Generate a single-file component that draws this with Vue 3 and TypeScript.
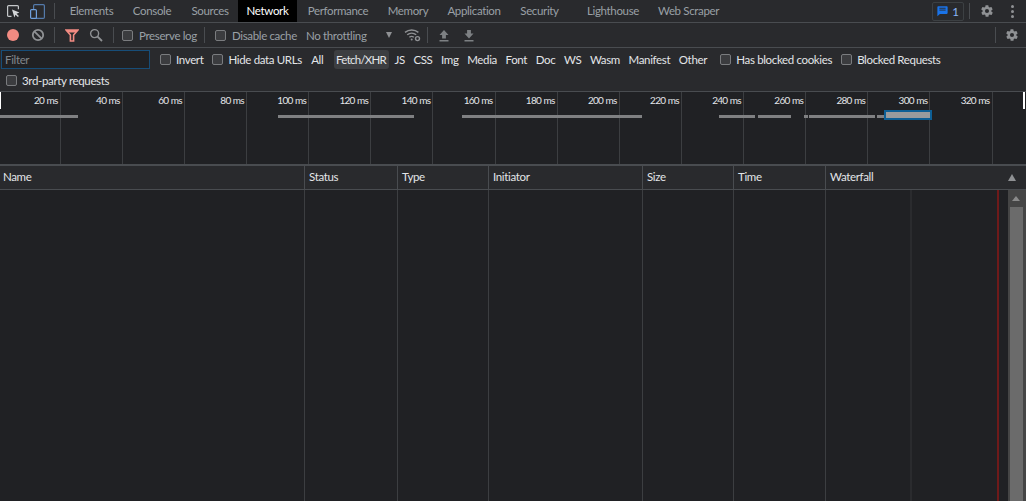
<script setup lang="ts">
const tabs = [
  { label: 'Elements', width: 61 },
  { label: 'Console', width: 60 },
  { label: 'Sources', width: 56 },
  { label: 'Network', width: 59, active: true },
  { label: 'Performance', width: 82 },
  { label: 'Memory', width: 58 },
  { label: 'Application', width: 74 },
  { label: 'Security', width: 57 },
  { label: 'Lighthouse', width: 90 },
  { label: 'Web Scraper', width: 61 },
]

const types = ['All', 'Fetch/XHR', 'JS', 'CSS', 'Img', 'Media', 'Font', 'Doc', 'WS', 'Wasm', 'Manifest', 'Other']

const ticks = Array.from({ length: 16 }, (_, i) => `${(i + 1) * 20} ms`)

const bars = [
  { left: -2, width: 80 },
  { left: 278, width: 136 },
  { left: 462, width: 180 },
  { left: 719, width: 36 },
  { left: 758, width: 33 },
  { left: 804, width: 4 },
  { left: 809, width: 66 },
  { left: 877, width: 7 },
]

const columns = [
  { label: 'Name', width: 305 },
  { label: 'Status', width: 93 },
  { label: 'Type', width: 91 },
  { label: 'Initiator', width: 154 },
  { label: 'Size', width: 91 },
  { label: 'Time', width: 92 },
]

const colWidths = columns.map((c) => c.width)
</script>

<template>
  <div class="devtools">
    <header class="tabbar">
      <div class="tool-icons">
        <svg width="13" height="13" viewBox="0 0 13 13" class="ic-inspect">
          <path d="M4.5 11.4H1.6a1 1 0 0 1-1-1V1.6a1 1 0 0 1 1-1h8.8a1 1 0 0 1 1 1v2.6" fill="none" stroke="#c4c7c9" stroke-width="1.2" />
          <path d="M5 4.6l7.4 3-2.9 1.1 2.4 2.4-1 1-2.4-2.4-1.1 2.9z" fill="#d5d7d9" />
        </svg>
        <svg width="15" height="15" viewBox="0 0 15 15" class="ic-device">
          <rect x="3.6" y="0.6" width="10.8" height="13.8" rx="1.2" fill="none" stroke="#5f8fc9" stroke-opacity=".8" stroke-width="1.2" />
          <rect x="0.6" y="5.6" width="5.8" height="8.8" rx="1" fill="#292a2d" stroke="#6f9fdc" stroke-width="1.2" />
        </svg>
      </div>
      <i class="sep sep-tabs"></i>
      <nav class="tabs">
        <span
          v-for="tab in tabs"
          :key="tab.label"
          class="tab"
          :class="{ active: tab.active }"
          :style="{ width: tab.width + 'px' }"
        >{{ tab.label }}</span>
      </nav>
      <div class="tab-end">
        <div class="issues">
          <svg width="11" height="12" viewBox="0 0 12 12">
            <path d="M1.3 0.8h9.4a.9.9 0 0 1 .9.9v6.6a.9.9 0 0 1-.9.9H3.2L.4 11.6V1.7a.9.9 0 0 1 .9-.9z" fill="#1a73e8" />
            <path d="M2.6 3h6.8M2.6 5h6.8" stroke="#292a2d" stroke-width="1" />
          </svg>
          <span>1</span>
        </div>
        <i class="sep"></i>
        <svg class="gear" width="14" height="14" viewBox="0 0 24 24">
          <path d="M19.4 13a7.8 7.8 0 0 0 0-2l2.1-1.6a.5.5 0 0 0 .1-.6l-2-3.5a.5.5 0 0 0-.6-.2l-2.5 1a7.5 7.5 0 0 0-1.7-1l-.4-2.7a.5.5 0 0 0-.5-.4h-4a.5.5 0 0 0-.5.4l-.4 2.7a7.5 7.5 0 0 0-1.7 1l-2.5-1a.5.5 0 0 0-.6.2l-2 3.5a.5.5 0 0 0 .1.6L4.6 11a7.8 7.8 0 0 0 0 2l-2.1 1.6a.5.5 0 0 0-.1.6l2 3.5c.1.2.4.3.6.2l2.5-1c.5.4 1.1.7 1.7 1l.4 2.7c0 .2.2.4.5.4h4c.3 0 .5-.2.5-.4l.4-2.7c.6-.3 1.2-.6 1.7-1l2.5 1c.2.1.5 0 .6-.2l2-3.5a.5.5 0 0 0-.1-.6zM12 15.5a3.5 3.5 0 1 1 0-7 3.5 3.5 0 0 1 0 7z" fill="#8f9194" />
        </svg>
        <div class="dots"><b></b><b></b><b></b></div>
      </div>
    </header>

    <div class="toolbar">
      <span class="record"></span>
      <svg class="ic-clear" width="14" height="14" viewBox="0 0 14 14">
        <circle cx="7" cy="7" r="5.2" fill="none" stroke="#8f9194" stroke-width="1.8" />
        <path d="M3.3 3.3l7.4 7.4" stroke="#8f9194" stroke-width="1.8" />
      </svg>
      <i class="sep sep-a"></i>
      <svg class="ic-filter" width="14" height="13" viewBox="0 0 14 13">
        <path d="M1 1h12L8.6 6v6H5.4V6z" fill="none" stroke="#f28b82" stroke-width="1.6" />
        <path d="M1 1h12L10.5 3.6h-7z" fill="#f28b82" />
      </svg>
      <svg class="ic-search" width="14" height="14" viewBox="0 0 14 14">
        <circle cx="5.6" cy="5.6" r="4" fill="none" stroke="#8f9194" stroke-width="1.4" />
        <path d="M8.6 8.6l4.4 4.4" stroke="#8f9194" stroke-width="1.8" />
      </svg>
      <i class="sep sep-b"></i>
      <label class="check dim preserve"><i class="box"></i>Preserve log</label>
      <i class="sep"></i>
      <label class="check dim disable"><i class="box"></i>Disable cache</label>
      <span class="throttle">No throttling</span>
      <i class="caret"></i>
      <svg class="ic-wifi" width="17" height="14" viewBox="0 0 17 14">
        <path d="M1 4.4a10.4 10.4 0 0 1 13.4 0M3.2 6.8a7 7 0 0 1 9 0M5.4 9.2a3.6 3.6 0 0 1 4.4 0" fill="none" stroke="#8f9194" stroke-width="1.4" />
        <circle cx="7.7" cy="11.4" r="1" fill="#8f9194" />
        <circle cx="13.5" cy="10.6" r="2" fill="#292a2d" stroke="#8f9194" stroke-width="1.4" />
      </svg>
      <i class="sep sep-c"></i>
      <svg class="ic-up" width="12" height="13" viewBox="0 0 12 13">
        <path d="M6 1L1.5 6h2.6v3.6h3.8V6h2.6zM1.5 11h9v1.6h-9z" fill="#7d8083" />
      </svg>
      <svg class="ic-down" width="12" height="13" viewBox="0 0 12 13">
        <path d="M4.1 1h3.8v3.6h2.6L6 9.6 1.5 4.6h2.6zM1.5 11h9v1.6h-9z" fill="#7d8083" />
      </svg>
      <div class="toolbar-end">
        <i class="sep"></i>
        <svg class="gear" width="14" height="14" viewBox="0 0 24 24">
          <path d="M19.4 13a7.8 7.8 0 0 0 0-2l2.1-1.6a.5.5 0 0 0 .1-.6l-2-3.5a.5.5 0 0 0-.6-.2l-2.5 1a7.5 7.5 0 0 0-1.7-1l-.4-2.7a.5.5 0 0 0-.5-.4h-4a.5.5 0 0 0-.5.4l-.4 2.7a7.5 7.5 0 0 0-1.7 1l-2.5-1a.5.5 0 0 0-.6.2l-2 3.5a.5.5 0 0 0 .1.6L4.6 11a7.8 7.8 0 0 0 0 2l-2.1 1.6a.5.5 0 0 0-.1.6l2 3.5c.1.2.4.3.6.2l2.5-1c.5.4 1.1.7 1.7 1l.4 2.7c0 .2.2.4.5.4h4c.3 0 .5-.2.5-.4l.4-2.7c.6-.3 1.2-.6 1.7-1l2.5 1c.2.1.5 0 .6-.2l2-3.5a.5.5 0 0 0-.1-.6zM12 15.5a3.5 3.5 0 1 1 0-7 3.5 3.5 0 0 1 0 7z" fill="#8f9194" />
        </svg>
      </div>
    </div>

    <div class="filters">
      <div class="filter-row">
        <div class="filter-input">Filter</div>
        <label class="check invert"><i class="box"></i>Invert</label>
        <label class="check hide-urls"><i class="box"></i>Hide data URLs</label>
        <div class="types">
          <span v-for="t in types" :key="t" class="type" :class="{ on: t === 'Fetch/XHR', all: t === 'All' }">{{ t }}</span>
        </div>
        <label class="check blocked-c"><i class="box"></i>Has blocked cookies</label>
        <label class="check"><i class="box"></i>Blocked Requests</label>
      </div>
      <div class="filter-row second">
        <label class="check"><i class="box"></i>3rd-party requests</label>
      </div>
    </div>

    <section class="overview">
      <div class="ticks">
        <div v-for="t in ticks" :key="t" class="tick">{{ t }}</div>
      </div>
      <i class="handle left"></i>
      <i class="handle right"></i>
      <i v-for="b in bars" :key="b.left" class="bar" :style="{ left: b.left + 'px', width: b.width + 'px' }"></i>
      <i class="bar-sel"></i>
    </section>

    <section class="grid">
      <div class="grid-head">
        <div v-for="c in columns" :key="c.label" class="th" :style="{ width: c.width + 'px' }">{{ c.label }}</div>
        <div class="th wf">
          Waterfall
          <i class="sort"></i>
        </div>
      </div>
      <div class="grid-body">
        <div v-for="(w, i) in colWidths" :key="i" class="col" :style="{ width: w + 'px' }"></div>
        <div class="col-wf">
          <i class="wf-line"></i>
          <i class="wf-red"></i>
          <div class="scrollbar">
            <i class="arrow"></i>
            <i class="thumb"></i>
          </div>
        </div>
      </div>
    </section>
  </div>
</template>

<style>
html,
body {
  margin: 0;
  background: #202124;
}
</style>

<style scoped>
.devtools {
  width: 1026px;
  height: 501px;
  overflow: hidden;
  display: flex;
  flex-direction: column;
  background: #202124;
  color: #e3e5e8;
  font-family: Lato, "Open Sans", sans-serif;
  font-size: 11.5px;
  letter-spacing: -0.35px;
}

.sep {
  display: block;
  flex: none;
  width: 1px;
  height: 16px;
  background: #494c50;
}

svg {
  display: block;
  flex: none;
}

.tabbar {
  height: 22px;
  flex: none;
  display: flex;
  align-items: center;
  background: #292a2d;
  border-bottom: 1px solid #494c50;
}

.tool-icons {
  display: flex;
  align-items: center;
  width: 54px;
}

.ic-inspect {
  margin-left: 7px;
}

.ic-device {
  margin-left: 10px;
}

.tabs {
  display: flex;
  height: 100%;
  margin-left: 6px;
}

.tab {
  flex: none;
  display: flex;
  align-items: center;
  justify-content: center;
  padding-bottom: 2px;
  box-sizing: border-box;
  white-space: nowrap;
  color: #9aa0a6;
}

.tab.active {
  background: #000;
  color: #fff;
}

.tab-end {
  margin-left: auto;
  display: flex;
  align-items: center;
}

.issues {
  width: 32px;
  height: 19px;
  box-sizing: border-box;
  border: 1px solid #3c4043;
  border-radius: 2px;
  display: flex;
  align-items: center;
  justify-content: center;
  gap: 4px;
  color: #8ab4f8;
}

.tab-end .sep {
  margin: 0 10px 0 5px;
}

.dots {
  width: 6px;
  margin: 0 11px 0 15px;
  display: flex;
  flex-direction: column;
  align-items: center;
  gap: 2px;
}

.dots b {
  width: 3px;
  height: 3px;
  border-radius: 50%;
  background: #8f9194;
}

.toolbar {
  height: 24px;
  flex: none;
  display: flex;
  align-items: center;
  background: #292a2d;
  border-bottom: 1px solid #494c50;
}

.record {
  width: 12px;
  height: 12px;
  margin-left: 7px;
  border-radius: 50%;
  background: #f28b82;
}

.ic-clear {
  margin-left: 12px;
}

.sep-a {
  margin-left: 9px;
}

.ic-filter {
  margin-left: 10px;
}

.ic-search {
  margin-left: 10px;
}

.sep-b {
  margin-left: 10px;
}

.preserve {
  width: 82px;
  margin-left: 8px;
}

.disable {
  width: 91px;
  margin-left: 10px;
}

.check {
  display: flex;
  align-items: center;
  color: #e3e5e8;
  white-space: nowrap;
}

.check.dim {
  color: #9aa0a6;
}

.box {
  flex: none;
  width: 9px;
  height: 9px;
  margin-right: 5px;
  border: 1px solid #7a7c7f;
  border-radius: 2px;
  background: #3b3c3f;
}

.check.dim .box {
  margin-right: 6px;
}

.throttle {
  width: 80px;
  color: #9aa0a6;
}

.caret {
  width: 0;
  height: 0;
  border: 3.5px solid transparent;
  border-top: 6px solid #8f9194;
  border-bottom: 0;
}

.ic-wifi {
  margin-left: 12px;
}

.sep-c {
  margin-left: 6px;
}

.ic-up {
  margin-left: 10px;
}

.ic-down {
  margin-left: 13px;
}

.toolbar-end {
  margin-left: auto;
  display: flex;
  align-items: center;
  padding-right: 7px;
}

.toolbar-end .sep {
  margin-right: 9px;
}

.filters {
  height: 43px;
  flex: none;
  background: #292a2d;
  border-bottom: 1px solid #494c50;
}

.filter-row {
  height: 22px;
  display: flex;
  align-items: center;
  padding-left: 1px;
}

.filter-row.second {
  height: 21px;
  padding-left: 6px;
}

.filter-input {
  width: 149px;
  height: 19px;
  box-sizing: border-box;
  border: 1px solid #174d78;
  padding-left: 3px;
  line-height: 17px;
  background: #202124;
  color: #80868b;
}

.invert {
  margin-left: 10px;
}

.hide-urls {
  margin-left: 9px;
}

.types {
  display: flex;
  align-items: center;
  margin-left: 5px;
}

.type {
  flex: none;
  padding: 0 4.3px;
  color: #e3e5e8;
}

.type.all {
  margin-right: 6px;
}

.type.on {
  width: 55px;
  height: 19px;
  box-sizing: border-box;
  line-height: 19px;
  padding: 0;
  margin-right: 1.5px;
  text-align: center;
  letter-spacing: -0.75px;
  border-radius: 3px;
  background: #3c3e41;
}

.blocked-c {
  margin-left: 9px;
}

.blocked-c + .check {
  margin-left: 9px;
}

.overview {
  position: relative;
  height: 72px;
  flex: none;
  border-bottom: 2px solid #494c50;
  background: #202124;
}

.ticks {
  display: flex;
  height: 100%;
  margin-left: -1.5px;
}

.tick {
  flex: none;
  width: 62.13px;
  box-sizing: border-box;
  padding: 2px 2px 0 0;
  text-align: right;
  font-size: 10px;
  letter-spacing: -0.7px;
  word-spacing: 0.5px;
  color: #e3e5e8;
  border-right: 1px solid #3c3e41;
}

.handle {
  position: absolute;
  top: 0;
  width: 1px;
  height: 17px;
  background: #fff;
}

.handle.left {
  left: 0;
}

.handle.right {
  right: 1px;
  width: 2px;
}

.bar {
  position: absolute;
  top: 23px;
  height: 3px;
  background: #7f8082;
}

.bar-sel {
  position: absolute;
  left: 884px;
  top: 18px;
  width: 48px;
  height: 10px;
  box-sizing: border-box;
  border: 2px solid #0e5f95;
  background: #9a9b9d;
}

.grid {
  flex: 1;
  display: flex;
  flex-direction: column;
  min-height: 0;
}

.grid-head {
  height: 23px;
  flex: none;
  display: flex;
  background: #292a2d;
  border-bottom: 1px solid #494c50;
}

.th {
  flex: none;
  box-sizing: border-box;
  padding-left: 3px;
  line-height: 22px;
  color: #e3e5e8;
  border-right: 1px solid #494c50;
}

.th + .th {
  padding-left: 4px;
}

.th.wf {
  flex: 1;
  position: relative;
  border-right: 0;
}

.sort {
  position: absolute;
  right: 10px;
  top: 8px;
  width: 0;
  height: 0;
  border: 4px solid transparent;
  border-bottom: 7px solid #8f9194;
  border-top: 0;
}

.grid-body {
  flex: 1;
  display: flex;
  min-height: 0;
}

.col {
  flex: none;
  box-sizing: border-box;
  border-right: 1px solid #3c3e41;
}

.col-wf {
  flex: 1;
  position: relative;
}

.wf-line {
  position: absolute;
  top: 0;
  bottom: 0;
  left: 84px;
  width: 2px;
  background: #2a2b2e;
}

.wf-red {
  position: absolute;
  top: 0;
  bottom: 0;
  left: 171px;
  width: 2px;
  background: #6e1a1a;
}

.scrollbar {
  position: absolute;
  top: 0;
  bottom: 0;
  right: 0;
  width: 18px;
  background: #454545;
}

.arrow {
  position: absolute;
  top: 6px;
  left: 4px;
  width: 0;
  height: 0;
  border: 4px solid transparent;
  border-bottom: 5px solid #8a8a8a;
  border-top: 0;
}

.thumb {
  position: absolute;
  top: 17px;
  bottom: 0;
  left: 2px;
  width: 13px;
  background: #6b6b6b;
}
</style>
